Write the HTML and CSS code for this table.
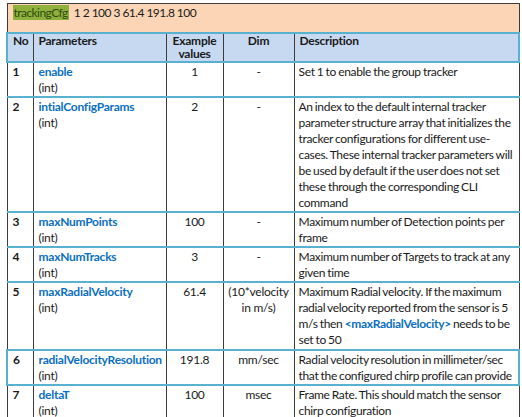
FILE: index.html
```html
<!DOCTYPE html>
<html>
<head>
<meta charset="utf-8">
<link rel="stylesheet" href="styles.css">
</head>
<body>
<table class="cfg">
  <colgroup>
    <col class="c-no"><col class="c-param"><col class="c-ex"><col class="c-dim"><col class="c-desc">
  </colgroup>
  <tr class="r-cmd">
    <td colspan="5"><span class="hl">trackingCfg</span>&nbsp; 1 2 100 3 61.4 191.8 100</td>
  </tr>
  <tr class="r-head">
    <th class="left">No</th>
    <th class="left">Parameters</th>
    <th>Example<br>values</th>
    <th>Dim</th>
    <th class="left">Description</th>
  </tr>
  <tr class="r1">
    <td class="num">1</td>
    <td><span class="pname">enable</span><br>(int)</td>
    <td class="ctr">1</td>
    <td class="ctr">-</td>
    <td class="desc">Set 1 to enable the group tracker</td>
  </tr>
  <tr class="r2">
    <td class="num">2</td>
    <td><span class="pname">intialConfigParams</span><br>(int)</td>
    <td class="ctr">2</td>
    <td class="ctr">-</td>
    <td class="desc">An index to the default internal tracker<br>parameter structure array that initializes the<br>tracker configurations for different use-<br>cases. These internal tracker parameters will<br>be used by default if the user does not set<br>these through the corresponding CLI<br>command</td>
  </tr>
  <tr class="r3">
    <td class="num">3</td>
    <td><span class="pname">maxNumPoints</span><br>(int)</td>
    <td class="ctr">100</td>
    <td class="ctr">-</td>
    <td class="desc">Maximum number of Detection points per<br>frame</td>
  </tr>
  <tr class="r4">
    <td class="num">4</td>
    <td><span class="pname">maxNumTracks</span><br>(int)</td>
    <td class="ctr">3</td>
    <td class="ctr">-</td>
    <td class="desc">Maximum number of Targets to track at any<br>given time</td>
  </tr>
  <tr class="r5">
    <td class="num">5</td>
    <td><span class="pname">maxRadialVelocity</span><br>(int)</td>
    <td class="ctr">61.4</td>
    <td class="ctr">(10*velocity<br>in m/s)</td>
    <td class="desc">Maximum Radial velocity. If the maximum<br>radial velocity reported from the sensor is 5<br>m/s then <span class="pname">&lt;maxRadialVelocity&gt;</span> needs to be<br>set to 50</td>
  </tr>
  <tr class="r6">
    <td class="num">6</td>
    <td><span class="pname">radialVelocityResolution</span><br>(int)</td>
    <td class="ctr">191.8</td>
    <td class="ctr">mm/sec</td>
    <td class="desc">Radial velocity resolution in millimeter/sec<br>that the configured chirp profile can provide</td>
  </tr>
  <tr class="r7">
    <td class="num">7</td>
    <td><span class="pname">deltaT</span><br>(int)</td>
    <td class="ctr">100</td>
    <td class="ctr">msec</td>
    <td class="desc">Frame Rate. This should match the sensor<br>chirp configuration</td>
  </tr>
</table>
<p class="caption">Table 12. trackingCfg configuration parameters for the group tracker</p>
</body>
</html>
```
FILE: styles.css
```css
html, body {
  margin: 0;
  padding: 0;
  background: #ffffff;
}
body {
  font-family: Lato, "Open Sans", sans-serif;
  font-size: 12px;
  letter-spacing: -0.25px;
  color: #1a1a1a;
  padding: 3px 0 0 6px;
}
.cfg {
  border-collapse: collapse;
  table-layout: fixed;
  width: 512px;
}
.c-no { width: 26px; }
.c-param { width: 133px; }
.c-ex { width: 57px; }
.c-dim { width: 71px; }
.c-desc { width: 225px; }

.cfg td, .cfg th {
  border-left: 1px solid #3c3c3c;
  border-right: 1px solid #3c3c3c;
  border-top: 2px solid #57b1cf;
  border-bottom: 2px solid #57b1cf;
  vertical-align: top;
  padding: 1px 0 0 5px;
  line-height: 16px;
  text-align: left;
}
.cfg td.desc {
  letter-spacing: -0.32px;
  word-spacing: -0.6px;
  padding-left: 4px;
}
.r-cmd td {
  background: #fbd5b6;
  border: 1px solid #3c3c3c;
  border-bottom: 2px solid #57b1cf;
  padding: 1px 5px 0;
  height: 27px;
  line-height: 16px;
  letter-spacing: -0.55px;
}
.hl {
  background: #8fb13c;
  color: #2f4a10;
  padding: 0 1px;
}
.r-head th {
  background: #c6d9f1;
  font-weight: 700;
  text-align: center;
  line-height: 13px;
  padding: 0;
  height: 27px;
}
.r-head th.left { text-align: left; padding-left: 5px; }
.r-head th:first-child { border-left: 2px solid #57b1cf; }
.r-head th:last-child { border-right: 2px solid #57b1cf; }

.num { font-weight: 700; }
.cfg td.ctr { text-align: center; padding-left: 0; padding-right: 0; }
.pname { color: #0a6fc2; font-weight: 700; }

.r1 td { height: 31px; }
.r2 td { height: 111px; }
.r3 td { height: 31px; }
.r4 td { height: 30px; }
.r5 td { height: 65px; }
.r6 td { height: 30px; }
.r6 td:first-child { border-left: 2px solid #57b1cf; }
.r6 td:last-child { border-right: 2px solid #57b1cf; }
.r7 td { height: 30px; border-bottom: 1px solid #3c3c3c; }

.caption {
  margin: 1px 0 0 30px;
  font-size: 12px;
  line-height: 16px;
  color: #1a1a1a;
}
```
